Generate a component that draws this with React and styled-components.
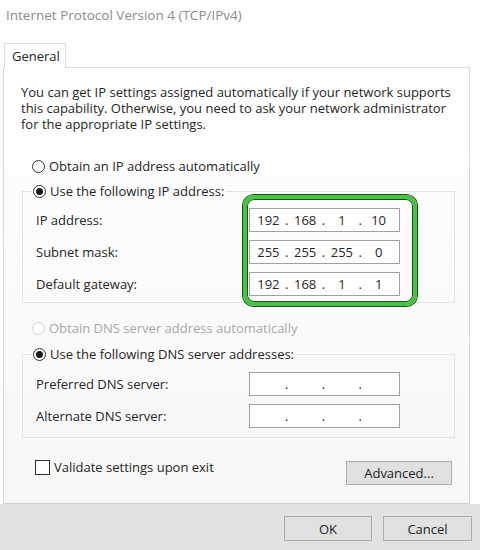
import React from 'react';
import styled, { createGlobalStyle } from 'styled-components';

const GlobalStyle = createGlobalStyle`
    html, body {
        margin: 0;
        padding: 0;
        background: #ffffff;
    }
    body {
        font-family: "Open Sans", "Noto Sans", sans-serif;
        font-size: 13px;
        color: #262626;
    }
`;

const Window = styled.div`
    width: 480px;
    height: 550px;
    display: flex;
    flex-direction: column;
    background: #fdfdfd;
    overflow: hidden;
`;

const TitleBar = styled.div`
    height: 34px;
    padding: 6px 0 0 6px;
    box-sizing: border-box;
    font-size: 13.5px;
    color: #8c8c8c;
    line-height: 18px;
`;

const TabStrip = styled.div`
    display: flex;
    padding: 9px 0 0 4px;
`;

const Tab = styled.div`
    width: 62px;
    height: 25px;
    box-sizing: border-box;
    padding-left: 7px;
    line-height: 25px;
    background: #fff;
    border: 1px solid #dcdcdc;
    border-bottom: none;
    margin-bottom: -1px;
    position: relative;
    z-index: 1;
`;

const Panel = styled.div`
    width: 467px;
    height: 437px;
    margin-left: 3px;
    box-sizing: border-box;
    background: linear-gradient(#ffffff, #f7f7f7);
    border: 1px solid #dcdcdc;
    border-bottom-color: #cfcfcf;
    padding: 16px 0 0 17px;
    display: flex;
    flex-direction: column;
`;

const Intro = styled.p`
    margin: 0;
    line-height: 16px;
    width: 440px;
`;

const Option = styled.label`
    display: flex;
    align-items: center;
    gap: 4px;
    height: 16px;
    line-height: 16px;
    margin-left: 11px;
    margin-top: ${({ gap }) => gap || 0}px;
    color: ${({ disabled }) => (disabled ? '#a8a8a8' : 'inherit')};
`;

const RadioMark = styled.span`
    width: 13px;
    height: 13px;
    box-sizing: border-box;
    border-radius: 50%;
    border: 1px solid ${({ disabled }) => (disabled ? '#d4d4d4' : '#333')};
    background: #fff;
    display: flex;
    align-items: center;
    justify-content: center;
    &::after {
        content: '';
        width: 7px;
        height: 7px;
        border-radius: 50%;
        background: ${({ checked }) => (checked ? '#1b1b1b' : 'transparent')};
    }
`;

const Group = styled.fieldset`
    margin: ${({ top }) => top}px 0 0 1px;
    width: 433px;
    box-sizing: border-box;
    border: 1px solid #e4e4e4;
    padding: ${({ pad }) => pad};
    min-width: 0;
`;

const Legend = styled.legend`
    padding: 0 2px 0 1px;
    margin-left: 9px;
    display: flex;
    align-items: center;
    gap: 4px;
    height: 16px;
    line-height: 16px;
`;

const Fields = styled.div`
    position: relative;
    display: flex;
    flex-direction: column;
    gap: ${({ gap }) => gap}px;
`;

const FieldRow = styled.div`
    display: flex;
    align-items: center;
    height: 24px;
`;

const FieldLabel = styled.span`
    width: 226px;
    padding-left: 13px;
    box-sizing: border-box;
`;

const IpBox = styled.div`
    width: 151px;
    height: 24px;
    box-sizing: border-box;
    border: 1px solid #a0a0a0;
    background: #fff;
    display: flex;
    align-items: center;
    padding: 0 4px 0 2px;
`;

const Octet = styled.span`
    flex: 1;
    text-align: center;
`;

const Dot = styled.span`
    width: 4px;
    text-align: center;
`;

/* green annotation drawn over the three address boxes */
const Highlight = styled.div`
    position: absolute;
    left: 220px;
    top: -13px;
    width: 174px;
    height: 111px;
    box-sizing: border-box;
    border-radius: 11px;
    border: 4px solid #45c43f;
    box-shadow: 0 0 0 1px #1d4f1c, inset 0 0 0 1px #1d4f1c;
    pointer-events: none;
`;

const BottomRow = styled.div`
    display: flex;
    align-items: flex-start;
    justify-content: space-between;
    width: 431px;
    margin-top: 21px;
`;

const Check = styled.label`
    display: flex;
    align-items: center;
    gap: 4px;
    margin-left: 14px;
    height: 16px;
`;

const CheckBox = styled.span`
    width: 15px;
    height: 15px;
    box-sizing: border-box;
    border: 1px solid #333;
    background: #fff;
`;

const Button = styled.button`
    font: inherit;
    color: #222;
    width: ${({ w }) => w}px;
    height: ${({ h }) => h || 25}px;
    margin-top: ${({ mt }) => mt || 0}px;
    background: #e1e1e1;
    border: 1px solid #adadad;
    padding: 0;
`;

const Footer = styled.div`
    flex: 1;
    background: #e2e2e2;
    display: flex;
    justify-content: flex-end;
    align-items: flex-start;
    gap: 11px;
    padding: 12px 8px 0 0;
`;

const IpField = ({ value }) => {
    const parts = value ? value.split('.') : ['', '', '', ''];
    return (
        <IpBox>
            {parts.map((p, i) => (
                <React.Fragment key={i}>
                    {i > 0 && <Dot>.</Dot>}
                    <Octet>{p}</Octet>
                </React.Fragment>
            ))}
        </IpBox>
    );
};

const App = () => {
    return (
        <>
            <GlobalStyle />
            <Window>
                <TitleBar>Internet Protocol Version 4 (TCP/IPv4)</TitleBar>
                <TabStrip>
                    <Tab>General</Tab>
                </TabStrip>
                <Panel>
                    <Intro>
                        You can get IP settings assigned automatically if your network supports
                        this capability. Otherwise, you need to ask your network administrator
                        for the appropriate IP settings.
                    </Intro>

                    <Option gap={26}>
                        <RadioMark />
                        Obtain an IP address automatically
                    </Option>

                    <Group top={9} pad="9px 0 6px 0">
                        <Legend>
                            <RadioMark checked />
                            Use the following IP address:
                        </Legend>
                        <Fields gap={8}>
                            <FieldRow>
                                <FieldLabel>IP address:</FieldLabel>
                                <IpField value="192.168.1.10" />
                            </FieldRow>
                            <FieldRow>
                                <FieldLabel>Subnet mask:</FieldLabel>
                                <IpField value="255.255.255.0" />
                            </FieldRow>
                            <FieldRow>
                                <FieldLabel>Default gateway:</FieldLabel>
                                <IpField value="192.168.1.1" />
                            </FieldRow>
                            <Highlight />
                        </Fields>
                    </Group>

                    <Option gap={17} disabled>
                        <RadioMark disabled />
                        Obtain DNS server address automatically
                    </Option>

                    <Group top={10} pad="10px 0 9px 0">
                        <Legend>
                            <RadioMark checked />
                            Use the following DNS server addresses:
                        </Legend>
                        <Fields gap={8}>
                            <FieldRow>
                                <FieldLabel>Preferred DNS server:</FieldLabel>
                                <IpField />
                            </FieldRow>
                            <FieldRow>
                                <FieldLabel>Alternate DNS server:</FieldLabel>
                                <IpField />
                            </FieldRow>
                        </Fields>
                    </Group>

                    <BottomRow>
                        <Check>
                            <CheckBox />
                            Validate settings upon exit
                        </Check>
                        <Button w={106} h={24} mt={2}>Advanced...</Button>
                    </BottomRow>
                </Panel>
                <Footer>
                    <Button w={88}>OK</Button>
                    <Button w={89}>Cancel</Button>
                </Footer>
            </Window>
        </>
    );
};

export default App;
